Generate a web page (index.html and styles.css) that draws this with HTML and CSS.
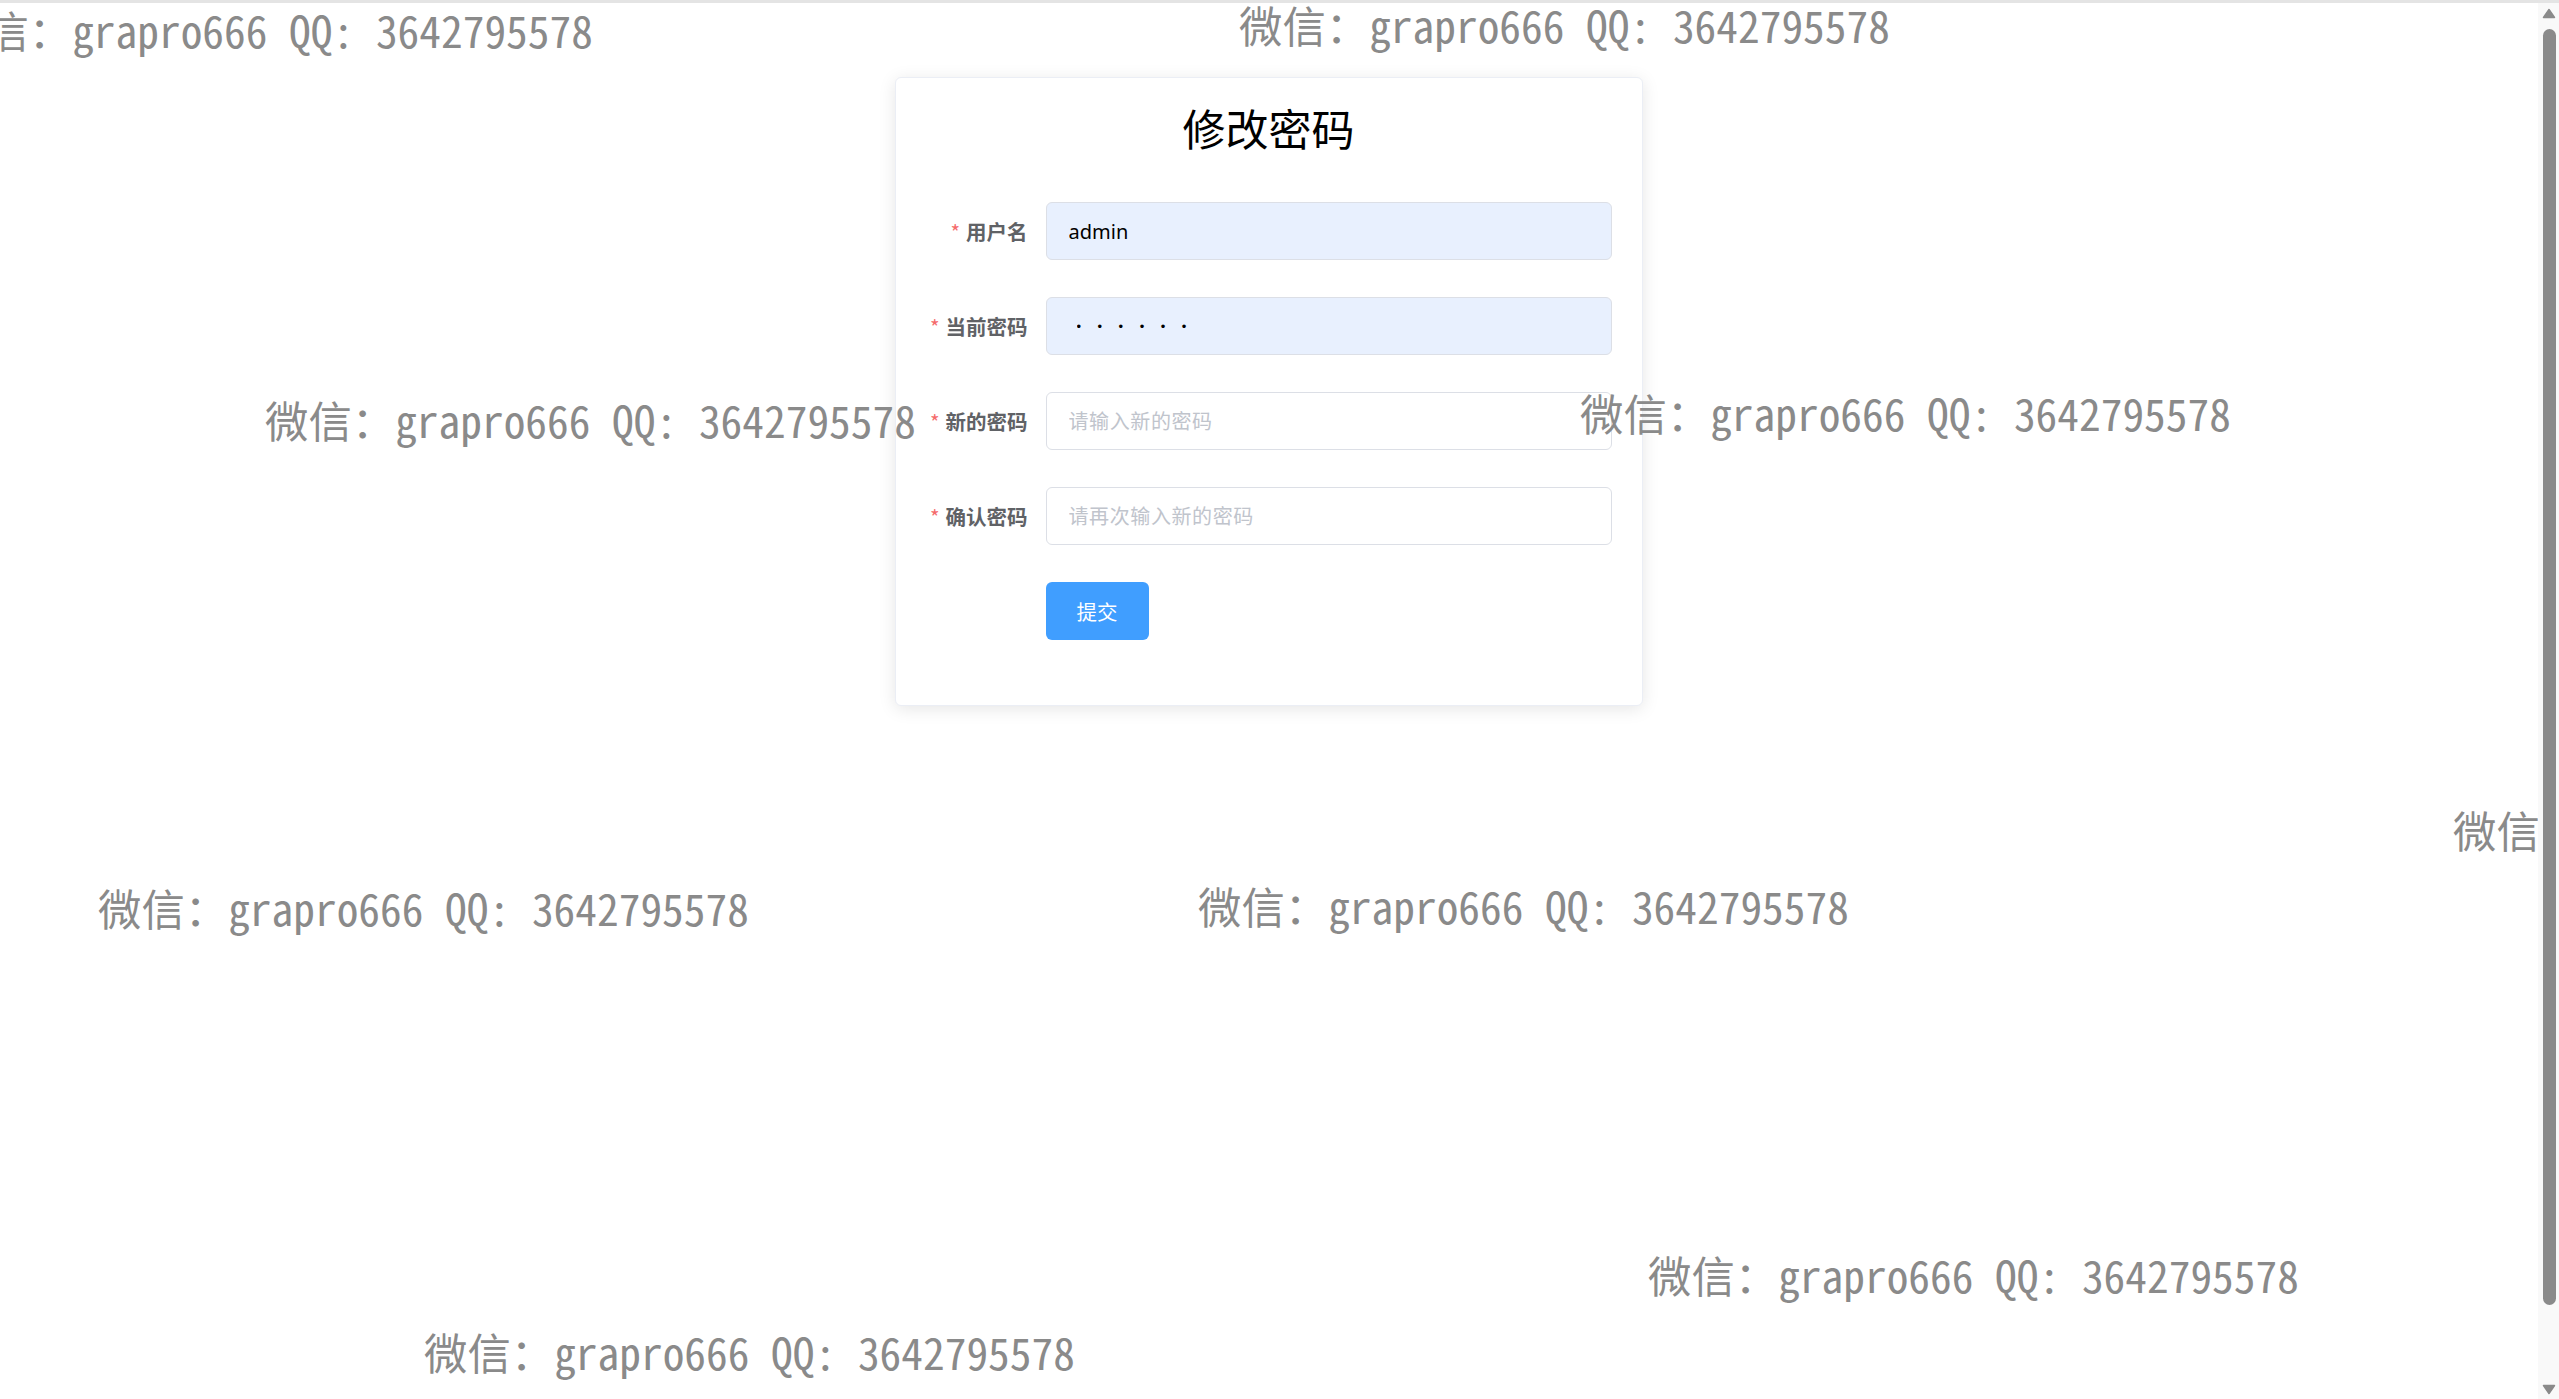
FILE: index.html
```html
<!DOCTYPE html>
<html lang="zh-CN">
<head>
<meta charset="utf-8">
<title>修改密码</title>
<link rel="stylesheet" href="styles.css">
</head>
<body>
<div class="topline"></div>
<main class="page">
  <section class="card">
    <h2 class="title">修改密码</h2>
    <form class="form">
      <div class="row">
        <label class="label required" for="username">用户名</label>
        <input class="input filled" id="username" type="text" value="admin">
      </div>
      <div class="row">
        <label class="label required" for="oldpwd">当前密码</label>
        <input class="input filled pwd" id="oldpwd" type="password" value="123456">
      </div>
      <div class="row">
        <label class="label required" for="newpwd">新的密码</label>
        <input class="input" id="newpwd" type="password" placeholder="请输入新的密码">
      </div>
      <div class="row">
        <label class="label required" for="confirmpwd">确认密码</label>
        <input class="input" id="confirmpwd" type="password" placeholder="请再次输入新的密码">
      </div>
      <div class="row row-last">
        <span class="label"></span>
        <button class="btn" type="button">提交</button>
      </div>
    </form>
  </section>
</main>
<div class="watermarks">
  <span class="wm wm1">微信：grapro666 QQ: 3642795578</span>
  <span class="wm wm2">微信：grapro666 QQ: 3642795578</span>
  <span class="wm wm3">微信：grapro666 QQ: 3642795578</span>
  <span class="wm wm4">微信：grapro666 QQ: 3642795578</span>
  <span class="wm wm5">微信：grapro666 QQ: 3642795578</span>
  <span class="wm wm6">微信：grapro666 QQ: 3642795578</span>
  <span class="wm wm7">微信：grapro666 QQ: 3642795578</span>
  <span class="wm wm8">微信：grapro666 QQ: 3642795578</span>
  <span class="wm wm9">微信：grapro666 QQ: 3642795578</span>
</div>
<div class="scrollbar">
  <svg class="arrow arrow-up" width="14" height="11" viewBox="0 0 14 11"><path d="M7 1.5 L12.5 9.5 H1.5 Z" fill="#8a8a8a" stroke="#8a8a8a" stroke-width="1.5" stroke-linejoin="round"/></svg>
  <div class="thumb"></div>
  <svg class="arrow arrow-down" width="14" height="11" viewBox="0 0 14 11"><path d="M7 9.5 L12.5 1.5 H1.5 Z" fill="#8a8a8a" stroke="#8a8a8a" stroke-width="1.5" stroke-linejoin="round"/></svg>
</div>
</body>
</html>
```

FILE: styles.css
```css
html, body {
  margin: 0;
  padding: 0;
  height: 100%;
  overflow: hidden;
  background: #fff;
  font-family: "Noto Sans", "Noto Sans CJK SC", sans-serif;
}

.topline {
  height: 3px;
  background: #e4e4e4;
}

.page {
  width: calc(100% - 22px);
  padding-top: 74px;
  display: flex;
  justify-content: center;
}

.card {
  width: 748px;
  box-sizing: border-box;
  background: #fff;
  border: 1px solid #ebeef5;
  border-radius: 6px;
  box-shadow: 0 3px 17px rgba(0, 0, 0, 0.1);
  padding: 28px 30px 65px;
}

.title {
  margin: 0 0 53px;
  font-family: "Noto Sans CJK SC", sans-serif;
  font-size: 43px;
  line-height: 43px;
  font-weight: 400;
  color: #000;
  text-align: center;
}

.form {
  margin: 0;
}

.row {
  display: flex;
  align-items: center;
  height: 58px;
  margin-bottom: 37px;
}

.row-last {
  margin-bottom: 0;
}

.label {
  flex: none;
  width: 120px;
  box-sizing: border-box;
  padding-right: 18px;
  text-align: right;
  font-family: "Noto Sans CJK SC", sans-serif;
  font-size: 20.5px;
  font-weight: 700;
  color: #606266;
  line-height: 58px;
  white-space: nowrap;
}

.required::before {
  content: "*";
  color: #f56c6c;
  margin-right: 6px;
  font-weight: 400;
}

.input {
  flex: none;
  width: 566px;
  height: 58px;
  box-sizing: border-box;
  border: 1px solid #dcdfe6;
  border-radius: 6px;
  padding: 0 22px;
  margin: 0;
  font-family: "Noto Sans", "Noto Sans CJK SC", sans-serif;
  font-size: 20px;
  color: #000;
  background: #fff;
  outline: none;
}

.input::placeholder {
  color: #c0c4cc;
  font-family: "Noto Sans CJK SC", sans-serif;
  letter-spacing: 0.6px;
}

.filled {
  background: #e8f0fe;
}

.pwd {
  font-family: "Liberation Sans", sans-serif;
  font-size: 13px;
  letter-spacing: 16.5px;
  padding-left: 30px;
}

.btn {
  width: 103px;
  height: 58px;
  border: none;
  border-radius: 6px;
  background: #409eff;
  color: #fff;
  font-family: "Noto Sans CJK SC", sans-serif;
  font-size: 20.5px;
  padding: 0;
  cursor: pointer;
}

.watermarks {
  position: absolute;
  left: 0;
  top: 0;
  right: 21px;
  bottom: 0;
  overflow: hidden;
  pointer-events: none;
  z-index: 10;
}

.wm {
  position: absolute;
  white-space: nowrap;
  font-family: "Noto Sans Mono CJK SC", "Noto Sans CJK SC", monospace;
  font-size: 43.4px;
  line-height: 43px;
  color: #8a8a8a;
}

.wm1 { left: -58px; top: 8px; }
.wm2 { left: 1239px; top: 3px; }
.wm3 { left: 265px; top: 398px; }
.wm4 { left: 1580px; top: 391px; }
.wm5 { left: 2453px; top: 808px; }
.wm6 { left: 98px; top: 886px; }
.wm7 { left: 1198px; top: 884px; }
.wm8 { left: 1648px; top: 1253px; }
.wm9 { left: 424px; top: 1330px; }

.scrollbar {
  position: fixed;
  top: 3px;
  right: 0;
  bottom: 0;
  width: 21px;
  background: #f9f9f9;
  z-index: 20;
}

.arrow {
  position: absolute;
  left: 4px;
}

.arrow-up { top: 5px; }
.arrow-down { top: 1381px; }

.thumb {
  position: absolute;
  left: 5px;
  top: 26px;
  width: 13px;
  height: 1276px;
  border-radius: 7px;
  background: #8a8a8a;
}
```
